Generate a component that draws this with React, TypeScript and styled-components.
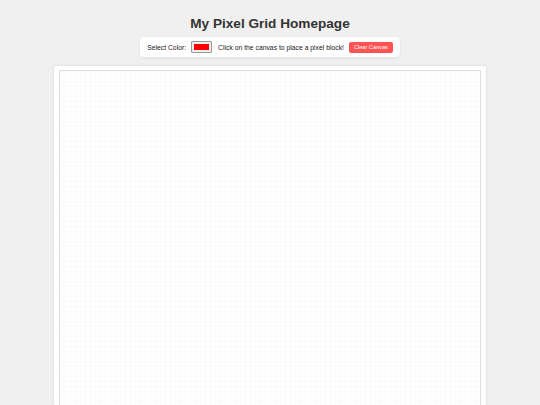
import React from 'react';
import styled, { createGlobalStyle } from 'styled-components';

const GlobalStyle = createGlobalStyle`
  html, body {
    margin: 0;
    padding: 0;
    background: #f0f0f0;
    font-family: "Liberation Sans", Arial, sans-serif;
    color: #333;
    overflow: hidden;
  }
`;

const Page = styled.div`
  display: flex;
  flex-direction: column;
  align-items: center;
  padding-top: 16px;
  height: 405px;
  box-sizing: border-box;
`;

const Title = styled.h1`
  margin: 0 0 5px;
  font-size: 13.6px;
  font-weight: bold;
  color: #333;
  line-height: 16px;
`;

const Toolbar = styled.div`
  display: flex;
  align-items: center;
  gap: 5px;
  height: 20px;
  padding: 0 7px;
  background: #fff;
  border-radius: 4px;
  box-shadow: 0 1px 3px rgba(0, 0, 0, 0.08);
  font-size: 6.8px;
  color: #1a1a1a;
`;

const Label = styled.span`
  white-space: nowrap;
`;

const Swatch = styled.span<{ $color: string }>`
  display: inline-block;
  width: 21px;
  height: 12px;
  box-sizing: border-box;
  border: 1px solid #999;
  border-radius: 1px;
  padding: 2px;
  background: #efefef;
  margin-right: 1px;

  &::after {
    content: '';
    display: block;
    width: 100%;
    height: 100%;
    background: ${(p) => p.$color};
  }
`;

const ClearButton = styled.button`
  height: 11px;
  padding: 0 5px;
  border: none;
  border-radius: 2px;
  background: #ff5252;
  color: #fff;
  font-family: inherit;
  font-size: 5.6px;
  line-height: 11px;
  cursor: pointer;
`;

const Board = styled.div`
  margin-top: 9px;
  width: 432px;
  flex: 1;
  box-sizing: border-box;
  padding: 4px 5px 0;
  background: #fff;
  border-radius: 2px 2px 0 0;
  box-shadow: 0 0 3px rgba(0, 0, 0, 0.12);
  display: flex;
`;

const Canvas = styled.div`
  flex: 1;
  border: 1px solid #ddd;
  border-bottom: none;
  background-color: #fff;
  background-image:
    linear-gradient(to right, #fafafa 1px, transparent 1px),
    linear-gradient(to bottom, #fafafa 1px, transparent 1px);
  background-size: 5px 5px;
`;

export default function App(): JSX.Element {
  const [color] = React.useState('#ff0000');

  return (
    <>
      <GlobalStyle />
      <Page>
        <Title>My Pixel Grid Homepage</Title>
        <Toolbar>
          <Label>Select Color:</Label>
          <Swatch $color={color} />
          <Label>Click on the canvas to place a pixel block!</Label>
          <ClearButton>Clear Canvas</ClearButton>
        </Toolbar>
        <Board>
          <Canvas />
        </Board>
      </Page>
    </>
  );
}
